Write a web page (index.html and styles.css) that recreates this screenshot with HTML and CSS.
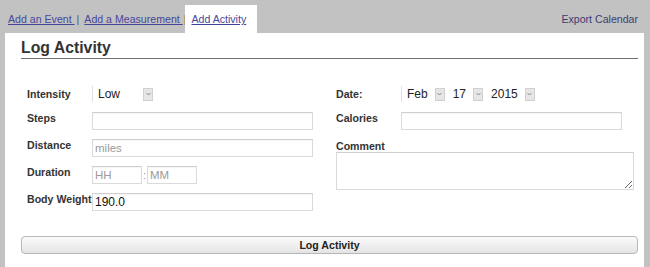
FILE: index.html
```html
<!DOCTYPE html>
<html lang="en">

<head>
    <meta charset="UTF-8">
    <meta name="viewport" content="width=device-width, initial-scale=1.0">
    <title>Log Activity</title>

    <link rel="stylesheet" href="styles.css">
</head>

<body>
    <div class="nav">
        <div class="nav-tabs">
            <a class="tab" href="#">Add an Event </a>
            <span class="sep">|</span>
            <a class="tab" href="#">Add a Measurement </a>
            <span class="sep sep-tight">|</span>
            <a class="tab tab-active" href="#">Add Activity</a>
        </div>
        <a class="export" href="#">Export Calendar</a>
    </div>

    <div class="panel">
        <h2 class="panel-title">Log Activity</h2>

        <div class="fields">
            <div class="col">
                <div class="row">
                    <label class="lbl lbl-select">Intensity</label>
                    <div class="select">
                        <span class="select-val select-wide">Low</span>
                        <span class="arrow"><svg width="5" height="4" viewBox="0 0 5 4"><path d="M0.5 1 L2.5 3 L4.5 1" fill="none" stroke="#888" stroke-width="1"/></svg></span>
                    </div>
                </div>
                <div class="row">
                    <label class="lbl">Steps</label>
                    <input class="inp" type="text">
                </div>
                <div class="row">
                    <label class="lbl">Distance</label>
                    <input class="inp" type="text" placeholder="miles">
                </div>
                <div class="row">
                    <label class="lbl">Duration</label>
                    <div class="duration">
                        <input class="inp inp-short" type="text" placeholder="HH">
                        <span class="colon">:</span>
                        <input class="inp inp-short" type="text" placeholder="MM">
                    </div>
                </div>
                <div class="row">
                    <label class="lbl">Body Weight</label>
                    <input class="inp inp-value" type="text" value="190.0">
                </div>
            </div>

            <div class="col">
                <div class="row">
                    <label class="lbl lbl-select">Date:</label>
                    <div class="select">
                        <span class="select-val">Feb</span>
                        <span class="arrow"><svg width="5" height="4" viewBox="0 0 5 4"><path d="M0.5 1 L2.5 3 L4.5 1" fill="none" stroke="#888" stroke-width="1"/></svg></span>
                        <span class="select-val">17</span>
                        <span class="arrow"><svg width="5" height="4" viewBox="0 0 5 4"><path d="M0.5 1 L2.5 3 L4.5 1" fill="none" stroke="#888" stroke-width="1"/></svg></span>
                        <span class="select-val">2015</span>
                        <span class="arrow"><svg width="5" height="4" viewBox="0 0 5 4"><path d="M0.5 1 L2.5 3 L4.5 1" fill="none" stroke="#888" stroke-width="1"/></svg></span>
                    </div>
                </div>
                <div class="row">
                    <label class="lbl">Calories</label>
                    <input class="inp" type="text">
                </div>
                <label class="lbl lbl-block">Comment</label>
                <textarea class="comment"></textarea>
            </div>
        </div>

        <button class="btn" type="button">Log Activity</button>
    </div>
</body>

</html>
```

FILE: styles.css
```css
* {
    box-sizing: border-box;
}

body {
    margin: 0;
    background-color: #c2c2c2;
    font-family: "Liberation Sans", Arial, sans-serif;
    color: #333;
}

.nav {
    display: flex;
    justify-content: space-between;
    align-items: flex-end;
    height: 33px;
    padding: 0 12px 0 8px;
    font-size: 10.6px;
}

.nav-tabs {
    display: flex;
    align-items: flex-end;
    height: 28px;
}

.tab,
.sep {
    line-height: 28px;
}

.tab {
    color: #47479a;
    text-decoration: underline;
    white-space: pre;
}

.sep {
    color: #555;
    margin: 0 5px 0 2px;
}

.sep-tight {
    margin: 0 0 0 1px;
}

.tab-active {
    background-color: #fff;
    padding: 0 11px 0 6px;
    margin-left: -1px;
}

.export {
    color: #3c3c70;
    text-decoration: none;
    line-height: 28px;
}

.panel {
    width: 639px;
    margin-left: 5px;
    background-color: #fff;
    padding: 5px 6px 17px 16px;
}

.panel-title {
    margin: 0;
    font-size: 15.8px;
    line-height: 20px;
    font-weight: bold;
    color: #333;
    border-bottom: 1px solid #707070;
}

.fields {
    display: grid;
    grid-template-columns: 286px 298px;
    column-gap: 23px;
    margin-top: 26px;
    padding-left: 6px;
}

.col {
    display: flex;
    flex-direction: column;
}

.row {
    display: flex;
    align-items: flex-start;
    height: 18px;
    margin-bottom: 9px;
}

.lbl {
    width: 65px;
    flex-shrink: 0;
    font-size: 10.6px;
    font-weight: bold;
    line-height: 13px;
    padding-top: 0;
    color: #333;
    white-space: nowrap;
}

.lbl-select {
    padding-top: 3px;
}

.lbl-block {
    width: auto;
    padding-top: 1px;
    line-height: 12px;
}

.inp {
    width: 221px;
    height: 18px;
    border: 1px solid #dadada;
    border-top-color: #cfcfcf;
    box-shadow: inset 0 1px 1px rgba(0, 0, 0, .04);
    padding: 0 2px;
    font-family: "Liberation Sans", Arial, sans-serif;
    font-size: 11.5px;
    color: #222;
    outline: none;
}

.inp::placeholder {
    color: #9a9a9a;
}

.inp-value {
    font-size: 12px;
    color: #111;
}

.duration {
    display: flex;
    align-items: center;
}

.inp-short {
    width: 50px;
}

.colon {
    width: 5px;
    text-align: center;
    font-size: 11px;
    color: #999;
}

.select {
    display: flex;
    align-items: center;
    height: 16px;
    margin-top: 1px;
    border-left: 1px solid #e2e2e2;
    font-size: 12px;
    color: #222;
}

.select-val {
    padding-left: 5px;
    padding-right: 7px;
}

.select-wide {
    width: 50px;
}

.arrow {
    display: flex;
    align-items: center;
    justify-content: center;
    width: 10px;
    height: 13px;
    background-color: #e6e6e6;
    border: 1px solid #d0d0d0;
    margin-right: 3px;
}

.comment {
    width: 298px;
    height: 38px;
    margin: 0;
    border: 1px solid #dadada;
    border-top-color: #cfcfcf;
    resize: both;
    outline: none;
    font-family: "Liberation Sans", Arial, sans-serif;
}

.btn {
    display: block;
    width: 617px;
    height: 18px;
    margin-top: 16px;
    padding: 0;
    border: 1px solid #b8b8b8;
    border-radius: 4px;
    background: linear-gradient(#fbfbfb, #e4e4e4);
    font-family: "Liberation Sans", Arial, sans-serif;
    font-size: 10.6px;
    font-weight: bold;
    color: #222;
}
```
